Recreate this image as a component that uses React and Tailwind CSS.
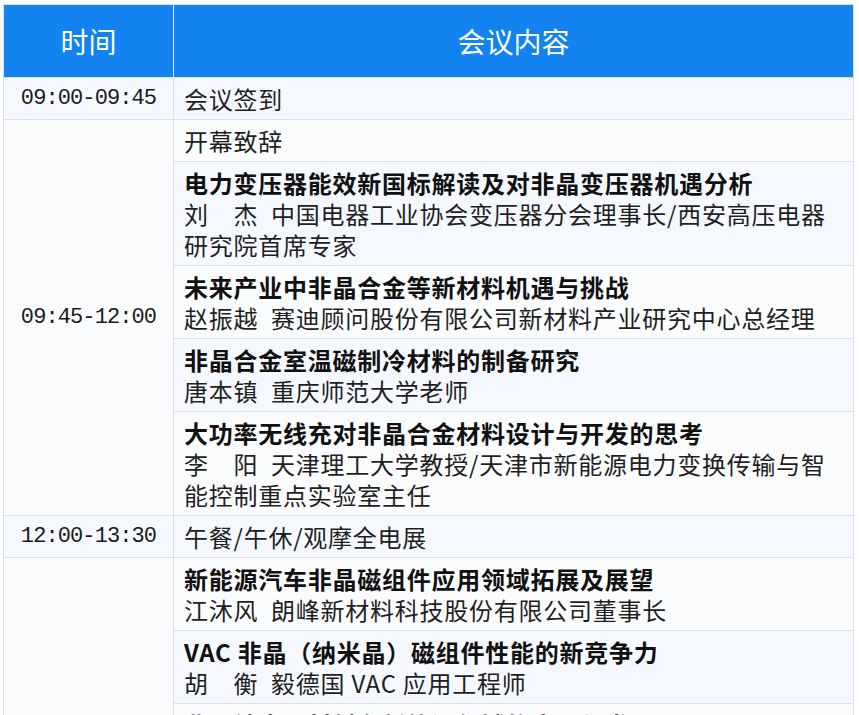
const groups = [
  {
    time: '09:00-09:45',
    items: [{ text: '会议签到' }],
  },
  {
    time: '09:45-12:00',
    items: [
      { text: '开幕致辞' },
      {
        title: '电力变压器能效新国标解读及对非晶变压器机遇分析',
        text: '刘　杰\u2002中国电器工业协会变压器分会理事长/西安高压电器研究院首席专家',
      },
      {
        title: '未来产业中非晶合金等新材料机遇与挑战',
        text: '赵振越\u2002赛迪顾问股份有限公司新材料产业研究中心总经理',
      },
      {
        title: '非晶合金室温磁制冷材料的制备研究',
        text: '唐本镇\u2002重庆师范大学老师',
      },
      {
        title: '大功率无线充对非晶合金材料设计与开发的思考',
        text: '李　阳\u2002天津理工大学教授/天津市新能源电力变换传输与智能控制重点实验室主任',
      },
    ],
  },
  {
    time: '12:00-13:30',
    items: [{ text: '午餐/午休/观摩全电展' }],
  },
  {
    time: '13:30-17:30',
    items: [
      {
        title: '新能源汽车非晶磁组件应用领域拓展及展望',
        text: '江沐风\u2002朗峰新材料科技股份有限公司董事长',
      },
      {
        title: 'VAC 非晶（纳米晶）磁组件性能的新竞争力',
        text: '胡　衡\u2002毅德国 VAC 应用工程师',
      },
      {
        title: '非晶纳米晶材料在新能源领域的应用与发展',
        text: '待　定\u2002企业代表',
      },
      {
        title: '非晶合金高频磁性器件的设计与应用',
        text: '待　定\u2002企业代表',
      },
      {
        title: '圆桌对话',
        text: '全体嘉宾',
      },
    ],
  },
];

const cjk = "font-['Noto_Sans_CJK_SC',sans-serif]";

export default function App() {
  let rowIndex = 0;
  const rows = [];
  groups.forEach((g, gi) => {
    g.items.forEach((item, ii) => {
      rowIndex += 1;
      const bg = rowIndex % 2 === 1 ? 'bg-[#f5f9ff]' : 'bg-[#fbfcfe]';
      rows.push(
        <tr key={`${gi}-${ii}`} className={bg}>
          {ii === 0 && (
            <td
              rowSpan={g.items.length}
              className="border border-[#dcdfe6] text-center align-middle font-['Liberation_Mono',monospace] text-[22px] tracking-[-0.9px] text-[#1a1a1a]"
            >
              {g.time}
            </td>
          )}
          <td className={`border border-[#dcdfe6] px-[10px] py-[5px] text-[24px] leading-[31px] tracking-[0.75px] text-[#1f1f1f] ${cjk}`}>
            {item.title && <div className="font-bold text-[#111]">{item.title}</div>}
            <div>{item.text}</div>
          </td>
        </tr>
      );
    });
  });

  return (
    <div className="pl-[3px] pt-[4px] bg-white min-h-screen">
      <table className="w-[851px] border-collapse border border-[#dcdfe6] table-fixed">
        <colgroup>
          <col className="w-[170px]" />
          <col />
        </colgroup>
        <thead>
          <tr className="bg-[#1283ef] h-[73px]">
            <th className={`border-r border-r-[#e6f0fc] text-center text-[28px] font-normal text-white ${cjk}`}>时间</th>
            <th className={`text-center text-[28px] font-normal text-white ${cjk}`}>会议内容</th>
          </tr>
        </thead>
        <tbody>{rows}</tbody>
      </table>
    </div>
  );
}
